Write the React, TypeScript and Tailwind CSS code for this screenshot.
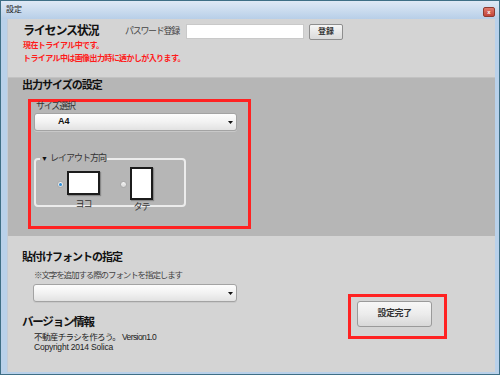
import React from "react";

function Radio({ checked }: { checked?: boolean }) {
  return (
    <div className="w-[7px] h-[7px] rounded-full border border-[#a9a9a9] bg-gradient-to-b from-[#f4f4f4] to-[#d8d8d8] flex items-center justify-center">
      {checked && <div className="w-[3px] h-[3px] rounded-full bg-[#2a8bd6]" />}
    </div>
  );
}

function Dropdown({ value, width }: { value?: string; width: string }) {
  return (
    <div
      className={`${width} h-[18px] rounded-[3px] border border-[#a3a3a3] bg-gradient-to-b from-[#fdfdfd] via-[#f2f2f2] to-[#e2e2e2] flex items-center relative shadow-[0_1px_0_#c8c8c8]`}
    >
      {value && <span className="pl-[23px] text-[9px] font-bold text-[#111]">{value}</span>}
      <svg className="absolute right-[3px] top-[7px]" width="5" height="3" viewBox="0 0 5 3">
        <polygon points="0,0 5,0 2.5,3" fill="#111" />
      </svg>
    </div>
  );
}

export default function App() {
  return (
    <div className="w-[500px] h-[375px] border border-[#3f6f86] bg-[#b9d1ea] flex flex-col font-['Liberation_Sans','Noto_Sans_CJK_JP',sans-serif] overflow-hidden">
      {/* title bar */}
      <div className="h-[18px] flex items-center justify-between bg-gradient-to-b from-[#dfe9f5] to-[#b8cfe8]">
        <span className="ml-[5px] text-[8px] leading-[8px] text-[#222]">設定</span>
        <div className="mr-[4px] mt-[3px] w-[12px] h-[10px] rounded-[2px] border border-[#8e3a30] bg-gradient-to-b from-[#e07a6c] to-[#c2443a] flex items-center justify-center">
          <span className="text-[6px] leading-[6px] text-white font-bold">x</span>
        </div>
      </div>

      {/* client area */}
      <div className="ml-[6px] mr-[4px] h-[353px] bg-[#d4d4d4] flex flex-col border-l border-[#c4ccd6]">
        {/* license */}
        <div className="h-[58px] pl-[15px] pt-[5px]">
          <div className="h-[15px] flex items-center">
            <span className="w-[102px] text-[12px] tracking-[-1.2px] font-bold text-[#111] leading-[15px]">
              ライセンス状況
            </span>
            <span className="text-[9px] tracking-[-1.3px] text-[#444]">パスワード登録</span>
            <div className="ml-[7px] w-[118px] h-[15px] bg-white border border-[#c9c9c9]" />
            <div className="ml-[5px] w-[34px] h-[16px] rounded-[2px] border border-[#8e8e8e] bg-gradient-to-b from-[#f6f6f6] to-[#dadada] flex items-center justify-center text-[8px] font-bold text-[#333]">
              登録
            </div>
          </div>
          <div className="mt-[1px] text-[8px] leading-[12.5px] font-bold text-[#ff1a1a] tracking-[-0.6px]">
            現在トライアル中です。
          </div>
          <div className="text-[8px] leading-[12px] font-bold text-[#ff1a1a] tracking-[-0.6px]">
            トライアル中は画像出力時に透かしが入ります。
          </div>
        </div>

        {/* output size */}
        <div className="h-[159px] bg-[#b6b6b6] border-t border-[#c2c2c2] pl-[14px]">
          <div className="text-[11px] leading-[14px] font-bold text-[#111] tracking-[-1px]">出力サイズの設定</div>
          <div className="mt-[7px] ml-[6px] w-[223px] h-[130px] border-[3px] border-[#ff2222] pl-[3px]">
            <div className="ml-[2px] text-[9px] leading-[9px] tracking-[-1.2px] text-[#333]">サイズ選択</div>
            <div className="mt-[2px]">
              <Dropdown value="A4" width="w-[203px]" />
            </div>
            <div className="mt-[27px] w-[152px] h-[49px] border-2 border-[#ececec] rounded-[4px] relative">
              <div className="absolute left-[4px] top-[-7px] bg-[#b6b6b6] px-[1px] text-[9px] leading-[11px] tracking-[-1px] text-[#333] flex items-center">
                <span className="text-[7px] mr-[3px] text-[#111]">▼</span>レイアウト方向
              </div>
              <div className="flex items-start pl-[21px]">
                <div className="flex items-start">
                  <div className="mt-[21px]">
                    <Radio checked />
                  </div>
                  <div className="ml-[3px] mt-[11px] flex flex-col items-center">
                    <div className="w-[33px] h-[24px] bg-white border-2 border-[#1c1c1c] shadow-[1px_1px_1px_#888]" />
                    <div className="mt-[4px] text-[9px] leading-[10px] tracking-[-1px] text-[#333]">ヨコ</div>
                  </div>
                </div>
                <div className="flex items-start ml-[20px]">
                  <div className="mt-[21px]">
                    <Radio />
                  </div>
                  <div className="ml-[3px] mt-[7px] flex flex-col items-center">
                    <div className="w-[23px] h-[33px] bg-white border-2 border-[#1c1c1c] shadow-[1px_1px_1px_#888]" />
                    <div className="mt-[2px] text-[9px] leading-[10px] tracking-[-1px] text-[#333]">タテ</div>
                  </div>
                </div>
              </div>
            </div>
          </div>
        </div>

        {/* font + version */}
        <div className="flex-1 flex">
          <div className="flex-1 pl-[14px] pt-[14px]">
            <div className="text-[11px] leading-[14px] font-bold text-[#111] tracking-[-1px]">貼付けフォントの指定</div>
            <div className="mt-[7px] ml-[12px] text-[8.5px] leading-[9px] tracking-[-1.1px] text-[#444]">
              ※文字を追加する際のフォントを指定します
            </div>
            <div className="mt-[4px] ml-[11px]">
              <Dropdown width="w-[204px]" />
            </div>
            <div className="mt-[13px] text-[11.5px] leading-[14px] font-bold text-[#111] tracking-[-1.2px]">バージョン情報</div>
            <div className="mt-[3px] ml-[12px] text-[8.5px] leading-[10px] text-[#222] tracking-[-0.6px]">
              不動産チラシを作ろう。 Version1.0
            </div>
            <div className="ml-[12px] text-[8.5px] leading-[10px] text-[#222] tracking-[-0.2px]">Copyright 2014 Solica</div>
          </div>
          <div className="mr-[48px] mt-[58px]">
            <div className="w-[99px] h-[45px] border-[3px] border-[#ff2222] pl-[6px] pt-[4px]">
              <div className="w-[75px] h-[26px] rounded-[3px] border border-[#9a9a9a] bg-gradient-to-b from-[#f7f7f7] via-[#ececec] to-[#d8d8d8] flex items-center justify-center text-[9px] font-bold text-[#333] tracking-[-0.5px]">
                設定完了
              </div>
            </div>
          </div>
        </div>
      </div>
    </div>
  );
}
